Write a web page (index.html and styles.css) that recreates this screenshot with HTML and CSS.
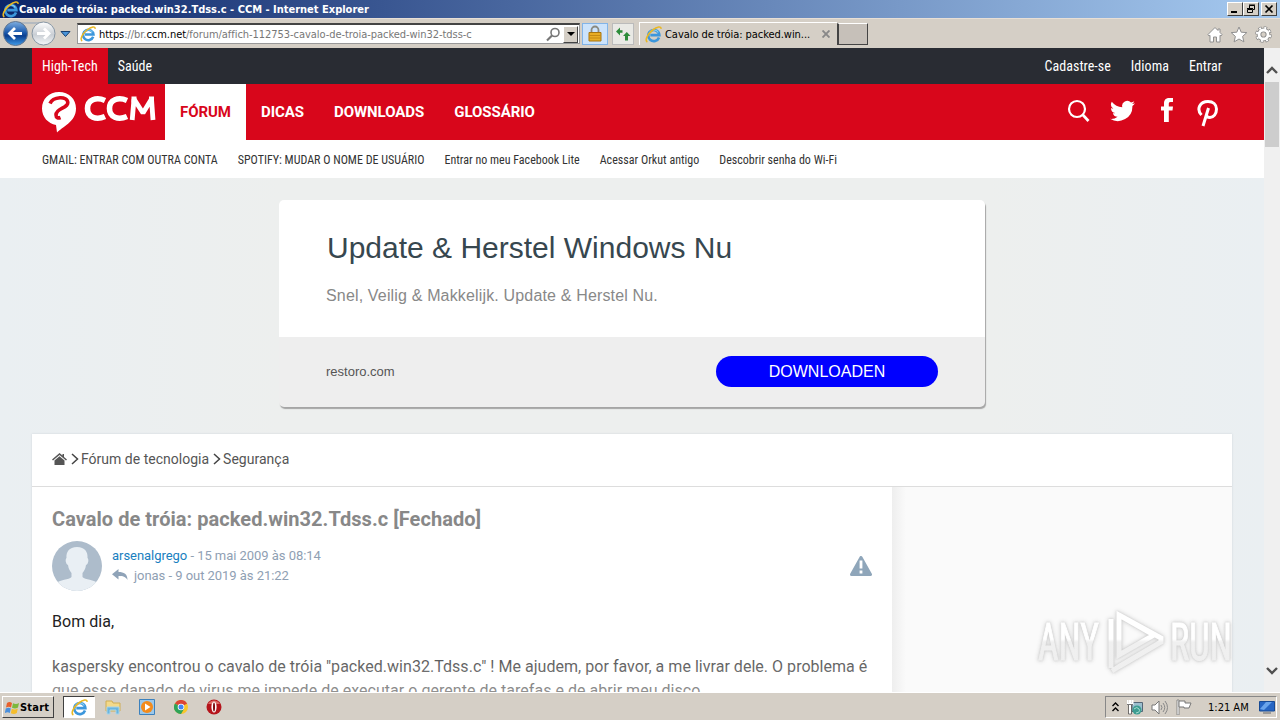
FILE: index.html
```
<!DOCTYPE html>
<html lang="pt-br">
<head>
	<meta charset="UTF-8">
	<title>Cavalo de tróia: packed.win32.Tdss.c - CCM</title>
	<link rel="stylesheet" href="styles.css">
</head>
<body>
	<!-- shared icons -->
	<svg class="defs" width="0" height="0">
		<symbol id="ie" viewBox="0 0 16 16">
			<path d="M13.2 10.8A5.2 5.2 0 1 1 13.5 8.6H5" fill="none" stroke="#3c97dc" stroke-width="2.500"/>
			<path d="M4 7.2a4.6 4.6 0 0 1 8.500-1" fill="none" stroke="#8fd4f6" stroke-width="1"/>
			<path d="M2.200 15C-.5 13.500 2.500 7.500 7 4S15.500-.2 15 2.800" fill="none" stroke="#e9b824" stroke-width="1.500"/>
		</symbol>
		<symbol id="chev" viewBox="0 0 12 8">
			<path d="M1 7 6 2l5 5" fill="none" stroke="#505050" stroke-width="2.400"/>
		</symbol>
	</svg>

	<div class="titlebar">
		<svg class="ie" width="17" height="17"><use href="#ie"/></svg>
		<h6>Cavalo de tróia: packed.win32.Tdss.c - CCM - Internet Explorer</h6>
		<ul class="winbtns">
			<li><svg width="14" height="12"><path d="M3 9h6" stroke="#000" stroke-width="2"/></svg></li>
			<li><svg width="14" height="12"><path d="M5.500 5V2.500h5v4H9M5 2h6M3.500 6.500h5v3h-5zM3 5.500h6" fill="none" stroke="#000"/></svg></li>
			<li class="close"><svg width="14" height="12"><path d="m3.500 2.500 7 7m0-7-7 7" stroke="#000" stroke-width="1.700"/></svg></li>
		</ul>
	</div>

	<div class="toolbar">
		<svg class="backfwd" width="74" height="30" viewBox="0 0 74 30">
			<defs>
				<linearGradient id="blue" x2="0" y2="1"><stop offset="0" stop-color="#7faee0"/><stop offset=".45" stop-color="#1e5cae"/><stop offset=".6" stop-color="#0b3f90"/><stop offset="1" stop-color="#3f9be8"/></linearGradient>
				<linearGradient id="grey" x2="0" y2="1"><stop offset="0" stop-color="#fff"/><stop offset=".55" stop-color="#c9ced4"/><stop offset="1" stop-color="#f5f8fa"/></linearGradient>
			</defs>
			<path d="M14 3h30v2H14z" fill="#b4bac0"/>
			<circle cx="15.500" cy="14.500" r="12" fill="url(#blue)" stroke="#62768f"/>
			<path d="M22 14.500H10m5-5.500-5.500 5.500L15 20" fill="none" stroke="#fff" stroke-width="2.800"/>
			<circle cx="43.500" cy="14.500" r="11.500" fill="url(#grey)" stroke="#8796a4"/>
			<path d="M37 14.500h12m-5-5 5 5-5 5" fill="none" stroke="#fff" stroke-width="2.800"/>
			<path d="M61 12.500h9l-4.500 5z" fill="#4a94d8" stroke="#173f70"/>
		</svg>
		<div class="address">
			<svg class="ie" width="16" height="16"><use href="#ie"/></svg>
			<p><b>https</b>://br.<b>ccm.net</b>/forum/affich-112753-cavalo-de-troia-packed-win32-tdss-c</p>
			<svg width="15" height="15" viewBox="0 0 15 15"><circle cx="9" cy="5.500" r="4" fill="none" stroke="#777" stroke-width="1.600"/><path d="m6 8.500-5 5" stroke="#777" stroke-width="2.200"/></svg>
			<span class="drop"><svg width="8" height="5"><path d="M0 0h8L4 4z"/></svg></span>
		</div>
		<span class="lock"><svg width="14" height="17" viewBox="0 0 14 17"><path d="M3.500 8V5a3.500 3.500 0 0 1 7 0v3" fill="none" stroke="#8a8a80" stroke-width="1.800"/><path d="M1 7.500h12V16H1z" fill="#e8ad25" stroke="#a87510"/><path d="M1 10.500h12M1 13h12" stroke="#c58a14"/></svg></span>
		<span class="refresh"><svg width="16" height="16" viewBox="0 0 16 16"><path d="M1 5.500 5 1.500v2.700h2.500v2.600H5v2.700z" fill="#2d8c3a"/><path d="m8 10 3.800-4L15.500 10H13v4.500h-3V10z" fill="#2d8c3a"/></svg></span>
		<div class="tab">
			<svg class="ie" width="17" height="17"><use href="#ie"/></svg>
			<p>Cavalo de tróia: packed.win...</p>
			<svg width="8" height="8"><path d="m.5.5 7 7m0-7-7 7" stroke="#888" stroke-width="1.900"/></svg>
		</div>
		<span class="newtab"></span>
		<div class="tools">
			<svg width="16" height="17" viewBox="0 0 16 17"><path d="M8 1.500 1 8.500l1 1.500 1-.7V16h3.500v-5h3v5H13V9.300l1 .7 1-1.500-2-2V3h-2v1.500z" fill="#fff" stroke="#909090"/></svg>
			<svg width="18" height="17" viewBox="0 0 18 17"><path d="m9 1 2.200 5.200 5.600.4-4.200 3.800 1.300 5.500L9 13l-4.900 2.900 1.300-5.500L1.200 6.600l5.600-.4z" fill="#fff" stroke="#909090"/></svg>
			<svg width="17" height="17" viewBox="0 0 17 17"><circle cx="8.500" cy="8.500" r="6.700" fill="none" stroke="#888" stroke-width="3.200" stroke-dasharray="3.260 2"/><circle cx="8.500" cy="8.500" r="4.500" fill="none" stroke="#888" stroke-width="4.600"/><circle cx="8.500" cy="8.500" r="6.700" fill="none" stroke="#fff" stroke-width="2" stroke-dasharray="2 3.260" stroke-dashoffset="-.6"/><circle cx="8.500" cy="8.500" r="4.500" fill="none" stroke="#fff" stroke-width="2.800"/></svg>
		</div>
	</div>

	<div class="window">
		<div class="page">
			<div class="top">
				<a class="on"><span>High-Tech</span></a>
				<a><span>Saúde</span></a>
				<div class="user"><a>Cadastre-se</a><a>Idioma</a><a>Entrar</a></div>
			</div>
			<div class="nav">
				<svg class="logo" width="114" height="42" viewBox="0 0 114 42">
					<path d="M17 1C7 1 0 8 0 17.500 0 26 6 32.500 14 34l1 7.500C20 36 34 31 34 17.500 34 8 27 1 17 1z" fill="#fff"/>
					<path d="M8 12.500C11 5.500 25.500 4.500 25.800 11.500 26 17.500 14 17 14 24c0 2.500 2 3.500 4.500 2.500" fill="none" stroke="#d8061b" stroke-width="3.600"/>
					<g fill="none" stroke="#fff" stroke-width="5.600">
						<path d="M63 9.500C54 5.500 45.500 9 45.500 17.500S54 29.500 63 25.500M85 9.500C76 5.500 67.500 9 67.500 17.500S76 29.500 85 25.500"/>
						<path d="m90.200 29 1.800-21 9 14 8.500-14 1.500 21" stroke-width="4.800" stroke-linejoin="bevel"/>
					</g>
					<path d="M89.500 5.500h5v6h-5zM107 5.500h5v6h-5z" fill="#fff"/>
				</svg>
				<a class="on">FÓRUM</a><a>DICAS</a><a>DOWNLOADS</a><a>GLOSSÁRIO</a>
				<div class="social">
					<svg width="24" height="24" viewBox="0 0 24 24"><circle cx="10" cy="10" r="8" fill="none" stroke="#fff" stroke-width="2.200"/><path d="m15.500 15.500 6 6.500" stroke="#fff" stroke-width="2.700"/></svg>
					<svg width="25" height="23" viewBox="0 2 24 21"><path fill="#fff" d="M24 4.600a10 10 0 0 1-2.800.8 5 5 0 0 0 2.100-2.700 10 10 0 0 1-3.100 1.200 4.900 4.900 0 0 0-8.400 4.500A14 14 0 0 1 1.700 3.200a4.900 4.900 0 0 0 1.500 6.500 5 5 0 0 1-2.200-.6 4.900 4.900 0 0 0 3.900 4.900 5 5 0 0 1-2.200.1 4.900 4.900 0 0 0 4.600 3.400A10 10 0 0 1 0 19.500a14 14 0 0 0 21.500-12.400A10 10 0 0 0 24 4.600z"/></svg>
					<svg width="12" height="24" viewBox="0 0 12 24"><path fill="#fff" d="M3 24V12.500H0V8.500h3V5.500C3 1.800 5 0 8.500 0H12v4H9.500C8 4 7.800 4.700 7.800 6v2.500H12l-.5 4H7.800V24z"/></svg>
					<svg width="22" height="27" viewBox="0 0 22 27"><path d="M4.500 15C-1 9 3 1.500 11 1.500c5 0 8.500 3 8.500 7.500 0 5-3 8.500-6.500 8.500-2 0-3.500-1-3.500-2.500M11.500 8 6 26" fill="none" stroke="#fff" stroke-width="3"/></svg>
				</div>
			</div>
			<div class="sub">
				<a>GMAIL: ENTRAR COM OUTRA CONTA</a><a>SPOTIFY: MUDAR O NOME DE USUÁRIO</a><a>Entrar no meu Facebook Lite</a><a>Acessar Orkut antigo</a><a>Descobrir senha do Wi-Fi</a>
			</div>

			<div class="ad">
				<div class="ad-top">
					<h2>Update &amp; Herstel Windows Nu</h2>
					<p>Snel, Veilig &amp; Makkelijk. Update &amp; Herstel Nu.</p>
				</div>
				<div class="ad-bottom">
					<span>restoro.com</span>
					<a>DOWNLOADEN</a>
				</div>
			</div>

			<div class="content">
				<div class="crumb">
					<svg width="15" height="13" viewBox="0 0 15 13"><path d="M7.500 0 0 6.500l1 1 6.500-5.600L14 7.500l1-1-3-2.600V1h-1.500v1.600z" fill="#555"/><path d="M7.500 3.200 2.500 7.500V12h10V7.500z" fill="#555"/></svg>
					<svg class="arrow" width="8" height="12"><path d="m1 1 5.500 5L1 11" fill="none" stroke="#444" stroke-width="1.500"/></svg>
					<a>Fórum de tecnologia</a>
					<svg class="arrow" width="8" height="12"><path d="m1 1 5.500 5L1 11" fill="none" stroke="#444" stroke-width="1.500"/></svg>
					<a>Segurança</a>
				</div>
				<div class="cols">
					<div class="post">
						<h1>Cavalo de tróia: packed.win32.Tdss.c [Fechado]</h1>
						<div class="author">
							<svg width="50" height="50" viewBox="0 0 50 50"><clipPath id="av"><circle cx="25" cy="25" r="25"/></clipPath><g clip-path="url(#av)"><path d="M0 0h50v50H0z" fill="#adbccb"/><path d="M25 6c-8 0-11 5-10.500 11-1.500 1-1 6 1.500 7 .5 4 2 6 3.500 8v4C17 39 8 38 3 43v7h44v-7c-5-5-14-4-16.500-7v-4c1.500-2 3-4 3.500-8 2.500-1 3-6 1.500-7C36 11 33 6 25 6z" fill="#e9eff4"/></g></svg>
							<div class="meta">
								<p><a>arsenalgrego</a> - 15 mai 2009 às 08:14</p>
								<p><svg width="16" height="11" viewBox="0 0 16 11"><path d="M6.500 0v3C12 3 15.500 5 15.500 11 13.500 7.500 11 7 6.500 7v3.500L0 5.200z" fill="#8fa3b8"/></svg>jonas - 9 out 2019 às 21:22</p>
							</div>
							<svg width="22" height="20" viewBox="0 0 22 20"><path d="M11 1.500 20.500 18.500h-19z" fill="#8fa6ba" stroke="#8fa6ba" stroke-width="3" stroke-linejoin="round"/><path d="M11 4.500v8M11 14.500V17.500" stroke="#fff" stroke-width="2.800"/></svg>
						</div>
						<div class="text">
							<p>Bom dia,</p>
							<p>kaspersky encontrou o cavalo de tróia "packed.win32.Tdss.c" ! Me ajudem, por favor, a me livrar dele. O problema é que esse danado de virus me impede de executar o gerente de tarefas e de abrir meu disco</p>
						</div>
					</div>
					<div class="side"></div>
				</div>
			</div>
		</div>
		<div class="scroll">
			<svg width="12" height="8"><use href="#chev"/></svg>
			<div class="thumb"></div>
			<svg class="down" width="12" height="8"><use href="#chev"/></svg>
		</div>
		<svg class="mark" width="210" height="74" viewBox="0 0 210 74">
			<linearGradient id="half" gradientUnits="userSpaceOnUse" x1="0" y1="0" x2="0" y2="74">
				<stop offset=".42" stop-color="#fff"/>
				<stop offset=".46" stop-color="#f0f0f0"/>
				<stop offset="1" stop-color="#efefef"/>
			</linearGradient>
			<g font-size="51" fill="url(#half)" stroke="url(#half)">
				<text x="4" y="52" textLength="61" lengthAdjust="spacingAndGlyphs">ANY</text>
				<text x="136" y="52" textLength="62" lengthAdjust="spacingAndGlyphs">RUN</text>
			</g>
			<path d="M85 7v40l35-20zM77 11v49M85 7l42 23v4L86 58l-8 5" fill="none" stroke="url(#half)" stroke-width="5"/>
		</svg>
	</div>

	<div class="taskbar">
		<span class="start"><svg width="15" height="15" viewBox="0 0 15 15"><path d="M2 3c2-1.500 3.500-1 5 0L6 7.500c-1.500-1-3-1-5 0z" fill="#e8602c"/><path d="M8 3.300c2 1 4 1 6-.3l-1 4.500c-2 1.300-4 1.200-6 .2z" fill="#7cb83c"/><path d="M.8 8.500c2-1.200 3.500-1 5 0l-1 4.500c-1.500-1-3-1-5 0z" fill="#4a8fdc"/><path d="M6.800 8.800c2 1 4 1 6-.2l-1 4.500c-2 1.300-4 1.200-6 .2z" fill="#f5bd2c"/></svg>Start</span>
		<span class="active"><svg class="ie" width="17" height="17"><use href="#ie"/></svg></span>
		<svg width="16" height="16" viewBox="0 0 16 16"><path d="M1 2h6l1 2h7v8H1z" fill="#f3d98a" stroke="#cfae55"/><path d="M2 15V8h12v7h-3v-4H5v4z" fill="#69b5df" stroke="#a8d4ea"/></svg>
		<svg width="16" height="16" viewBox="0 0 16 16"><path d="M.5.5h15v15H.5z" fill="#9cc8ea" stroke="#3c81bd"/><circle cx="8" cy="8" r="6" fill="#f38b1c"/><path d="m6 4.500 5.500 3.500L6 11.500z" fill="#fff"/></svg>
		<svg width="14" height="14" viewBox="0 0 14 14"><circle cx="7" cy="7" r="7" fill="#f8c62c"/><path d="M7 7 .9 3.500A7 7 0 0 1 13.100 3.500z" fill="#db4437"/><path d="M7 7 .9 3.500A7 7 0 0 0 7 14l3-5z" fill="#2fa359"/><circle cx="7" cy="7" r="3.300" fill="#fff"/><circle cx="7" cy="7" r="2.500" fill="#4285f4"/></svg>
		<svg width="16" height="16" viewBox="0 0 16 16"><circle cx="8" cy="8" r="7.500" fill="#b5141b"/><path d="M2 5a7 7 0 0 1 12 0z" fill="#dc6a65"/><ellipse cx="8" cy="8" rx="2.600" ry="5.500" fill="#fff"/><ellipse cx="8" cy="8" rx="1" ry="4.500" fill="#7d0b10"/></svg>
		<div class="tray">
			<svg width="7" height="10"><path d="m.5 4 3-3 3 3m-6 5 3-3 3 3" fill="none" stroke="#000" stroke-width="1.400"/></svg>
			<svg width="16" height="16" viewBox="0 0 16 16"><path d="M5 3.500h10.500v9H5z" fill="#9bbfce" stroke="#567"/><circle cx="10" cy="11" r="4.500" fill="#3c9d91"/><path d="M7 10q3-3 5 0t-3 4" fill="none" stroke="#a9ded1"/><path d="M.5 1v4h5V1M3 1v14" fill="none" stroke="#fff" stroke-width="2"/><path d="M0 5.500h6M1.500 6v9h3V6" fill="none" stroke="#555" stroke-width=".8"/></svg>
			<svg width="17" height="15" viewBox="0 0 17 15"><path d="M1 5h3l4-4v13l-4-4H1z" fill="#fff" stroke="#777"/><path d="M10 5q2 2.500 0 5M12 3q3.500 4.500 0 9M14 1q5 6.500 0 13" fill="none" stroke="#888"/></svg>
			<svg width="16" height="16" viewBox="0 0 16 16"><path d="M1 1v15h2V1z" fill="#fff" stroke="#777" stroke-width=".8"/><path d="M3 2h6v2h6l-2 5H8V8H3z" fill="#fff" stroke="#777"/></svg>
			<time>1:21 AM</time>
			<svg width="16" height="13" viewBox="0 0 16 13"><path d="M.5.5h15v9.500H.5z" fill="#2766c4" stroke="#174a94"/><path d="m1 8 6-7h6L5 9z" fill="#69a4ec"/><path d="M4 12h8" stroke="#888" stroke-width="1.500"/></svg>
		</div>
	</div>
</body>
</html>
```
FILE: styles.css
```
*{
	box-sizing: border-box;
}
body{
	margin: 0;
	width: 1280px;
	height: 720px;
	overflow: hidden;
	display: flex;
	flex-direction: column;
	font-family: Roboto, sans-serif;
	background: #d5cfc6;
}
h1,h2,h6,p,ul{
	margin: 0;
	padding: 0;
	font-weight: normal;
}
svg{
	display: block;
	flex: none;
}
.defs{
	position: absolute;
}
a,p,h1,h2,h6,span{
	white-space: nowrap;
}

/* browser */
.titlebar,
.toolbar,
.taskbar{
	font-family: "DejaVu Sans Condensed", "DejaVu Sans", sans-serif;
	font-stretch: condensed;
	font-size: 11px;
	display: flex;
	align-items: center;
	flex: none;
}
.titlebar{
	height: 18px;
	padding: 0 3px 0 2px;
	background: linear-gradient(to right,#0b2569,#a6caf0);
	color: #fff;
}
.titlebar h6{
	font-size: 11px;
	font-weight: bold;
}
.winbtns{
	display: flex;
	margin-left: auto;
	list-style: none;
}
.winbtns li{
	width: 16px;
	height: 14px;
	background: #d5cfc6;
	border: 1px solid;
	border-color: #fff #404040 #404040 #fff;
}
.winbtns .close{
	margin-left: 2px;
}
.toolbar{
	height: 30px;
	border-top: 1px solid #e8dfd6;
	padding-right: 8px;
}
.backfwd{
	margin-right: 3px;
}
.address{
	width: 503px;
	height: 21px;
	display: flex;
	align-items: center;
	padding: 0 1px 0 2px;
	background: #fff;
	border: 1px solid #999;
	border-top: 2px solid #444;
	color: #777;
}
.address p{
	flex: 1;
	margin-left: 3px;
	letter-spacing: -.05px;
}
.address b{
	color: #000;
	font-weight: normal;
}
.drop{
	width: 15px;
	height: 17px;
	margin-left: 2px;
	display: flex;
	align-items: center;
	justify-content: center;
	background: #d5cfc6;
	border: 1px solid;
	border-color: #fff #444 #444 #fff;
}
.lock,
.refresh{
	width: 26px;
	height: 22px;
	display: flex;
	align-items: center;
	justify-content: center;
	margin-left: 2px;
	background: #cce3fb;
	border: 1px solid #82b4e8;
}
.refresh{
	width: 22px;
	margin-left: 4px;
	background: #e9e9e5;
	border-color: #bbb;
}
.tab{
	width: 198px;
	height: 23px;
	margin-left: 5px;
	padding: 0 7px 0 5px;
	display: flex;
	align-items: center;
	border-left: 1px solid #fff;
	border-top: 1px solid #fff;
}
.tab p{
	flex: 1;
	margin-left: 3px;
	letter-spacing: -.05px;
}
.newtab{
	width: 31px;
	height: 22px;
	background: #c6c0b9;
	border: 1px solid #444;
	border-top-color: #fff;
	border-left-width: 2px;
}
.tools{
	display: flex;
	gap: 7px;
	margin-left: auto;
	padding-top: 2px;
}

/* site */
.window{
	height: 644px;
	display: flex;
	flex: none;
	overflow: hidden;
	position: relative;
}
.page{
	width: 1264px;
	background: linear-gradient(to right,#eaeff2,#edefee 280px,#edefee 990px,#eaeff2);
}
.top{
	height: 36px;
	padding: 0 32px;
	display: flex;
	background: #292c33;
	color: #fff;
	font-family: "Roboto Condensed", Roboto, sans-serif;
	font-stretch: 75%;
	font-size: 14px;
	line-height: 36px;
	letter-spacing: .03px;
}
.top a{
	padding: 0 10px;
}
.top .on{
	background: #d8061b;
}
.user{
	margin-left: auto;
}
.user a{
	display: inline-block;
}
.nav{
	height: 56px;
	padding: 0 45px 0 42px;
	display: flex;
	background: #d8061b;
	color: #fff;
	font-size: 15px;
	font-weight: bold;
	line-height: 56px;
	letter-spacing: -.05px;
}
.nav a{
	padding: 0 15px;
}
.nav .on{
	background: #fff;
	color: #d8061b;
}
.logo{
	margin: 7px 9px 0 0;
}
.social{
	display: flex;
	margin-left: auto;
	padding-top: 15px;
}
.social svg:nth-child(2){
	margin: 1px 0 0 19px;
}
.social svg:nth-child(3){
	margin: -1px 24px 0 26px;
}
.social svg:nth-child(4){
	margin-top: 1px;
}
.sub{
	height: 38px;
	padding-left: 42px;
	display: flex;
	gap: 20px;
	background: #fff;
	color: #333;
	font-family: "Roboto Condensed", Roboto, sans-serif;
	font-stretch: 75%;
	font-size: 12px;
	line-height: 40px;
	letter-spacing: .01px;
}
.ad{
	width: 706px;
	height: 207px;
	margin: 22px auto 27px;
	border-radius: 5px;
	overflow: hidden;
	background: #eee;
	box-shadow: 1px 2px 1px #a5a5a5;
	font-family: "Liberation Sans", Arial, sans-serif;
}
.ad-top{
	height: 137px;
	padding: 30px 48px 0;
	background: #fff;
}
.ad h2{
	font-size: 30px;
	line-height: 36px;
	color: #37474f;
}
.ad-top p{
	margin: 20px 0 0 -1px;
	font-size: 16px;
	line-height: 20px;
	letter-spacing: .16px;
	color: #888;
}
.ad-bottom{
	height: 70px;
	padding: 0 47px 2px;
	display: flex;
	align-items: center;
	justify-content: space-between;
	color: #555;
	font-size: 13px;
}
.ad-bottom a{
	width: 222px;
	height: 31px;
	border-radius: 16px;
	background: #00f;
	color: #fff;
	font-size: 16px;
	line-height: 31px;
	text-align: center;
}
.content{
	width: 1200px;
	height: 700px;
	margin: 0 auto;
	background: #fff;
	box-shadow: 0 0 2px #ccd3d8;
}
.crumb{
	height: 53px;
	padding: 0 20px 2px;
	display: flex;
	align-items: center;
	border-bottom: 1px solid #ddd;
	color: #555;
	font-size: 14px;
	letter-spacing: .01px;
}
.arrow{
	margin: 0 2px 0 4px;
}
.cols{
	display: flex;
	height: 600px;
}
.post{
	width: 860px;
	padding: 20px;
}
.side{
	flex: 1;
	background: linear-gradient(to right,#eee,#fafafa 14px);
}
.post h1{
	font-size: 20px;
	line-height: 24px;
	font-weight: bold;
	letter-spacing: .04px;
	color: #888;
}
.author{
	display: flex;
	align-items: center;
	margin-top: 10px;
}
.meta{
	flex: 1;
	margin-left: 10px;
	color: #8fa0b3;
	font-size: 13px;
	line-height: 20px;
	letter-spacing: -.04px;
}
.meta a{
	color: #1980c0;
}
.meta svg{
	display: inline-block;
	margin-right: 6px;
}
.text{
	position: relative;
	margin-top: 19px;
	font-size: 16px;
	line-height: 24px;
	letter-spacing: .03px;
	color: #222;
}
.text p{
	margin-bottom: 21px;
	white-space: normal;
}
/* fades the post out */
.text::after{
	content: "";
	position: absolute;
	top: 0;
	right: 0;
	bottom: 0;
	left: 0;
	background: linear-gradient(rgba(255,255,255,0) 15px,rgba(255,255,255,.55) 88px);
}
.scroll{
	width: 16px;
	padding: 18px 1px 0;
	display: flex;
	flex-direction: column;
	align-items: center;
	background: #f0f0f0;
}
.thumb{
	width: 14px;
	height: 65px;
	margin-top: 8px;
	background: #cdcdcd;
}
.down{
	margin: auto 0 17px;
	transform: rotate(180deg);
}
.mark{
	position: absolute;
	left: 1034px;
	top: 560px;
	font-family: "Roboto Condensed", Roboto, sans-serif;
	filter: drop-shadow(0 0 1px #ccc) drop-shadow(0 0 2px #d5d5d5);
}

/* taskbar */
.taskbar{
	height: 28px;
	padding: 1px 3px 0 2px;
	border-top: 1px solid #fff;
}
.start{
	width: 52px;
	height: 22px;
	display: flex;
	align-items: center;
	padding-left: 2px;
	font-weight: bold;
	letter-spacing: .2px;
	border: 1px solid;
	border-color: #fff #404040 #404040 #fff;
}
.active{
	width: 32px;
	height: 22px;
	margin-left: 9px;
	padding: 2px 7px;
	background: #fff;
	border: 1px solid;
	border-color: #404040 #fff #fff #404040;
}
.taskbar > svg{
	margin-left: 18px;
}
.taskbar > .active + svg{
	margin-left: 10px;
}
.taskbar > svg:nth-of-type(3){
	margin-left: 19px;
}
.tray{
	width: 172px;
	height: 22px;
	margin-left: auto;
	padding: 0 2px 0 6px;
	display: flex;
	align-items: center;
	gap: 8px;
	border: 1px solid;
	border-color: #888 #fff #fff #888;
}
.tray time{
	margin: 0 2px 0 8px;
	white-space: nowrap;
}
```
